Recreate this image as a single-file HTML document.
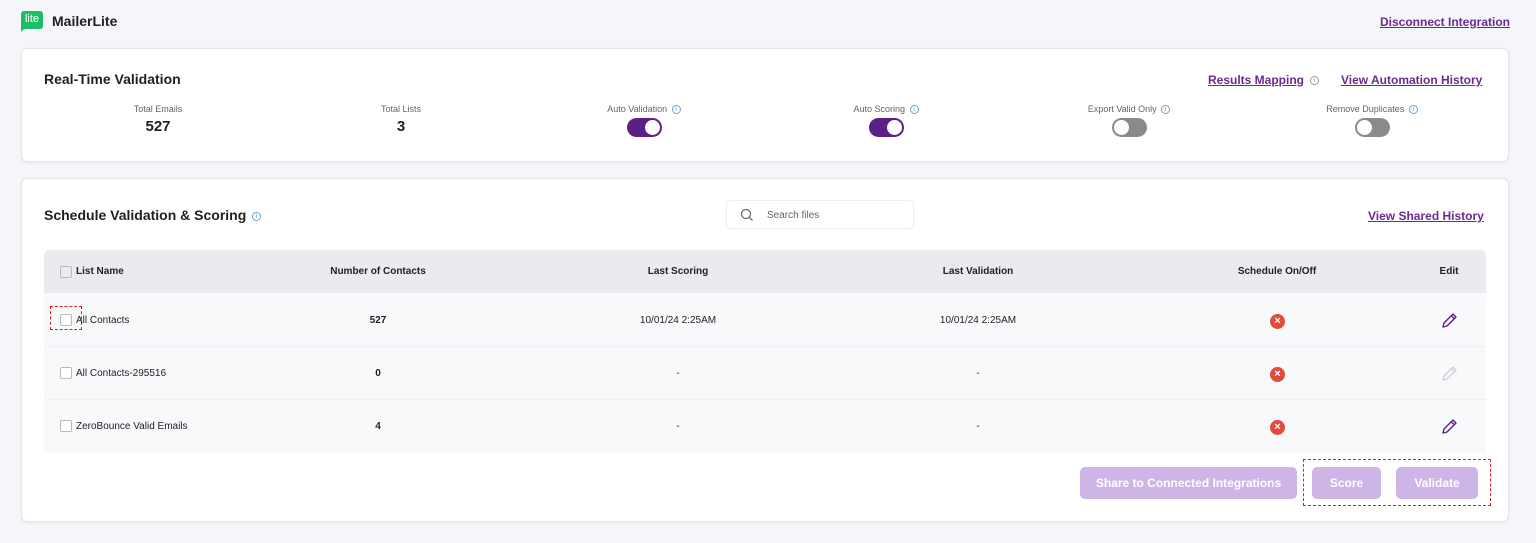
<!DOCTYPE html>
<html><head><meta charset="utf-8"><style>
*{margin:0;padding:0;box-sizing:border-box}
body{width:1536px;height:543px;background:#f5f6f9;font-family:"Liberation Sans",sans-serif;color:#1f1f24;position:relative;overflow:hidden}
.a{position:absolute}
.card{position:absolute;background:#fff;border:1px solid #e3e5ea;border-radius:6px;box-shadow:0 1px 3px rgba(0,0,0,.06)}
.lnk{color:#6b2a8f;text-decoration:underline;font-weight:bold;font-size:12px}
.stat{position:absolute;width:200px;text-align:center}
.stat .l{font-size:9px;color:#666;height:12px;line-height:12px}
.stat .v{font-size:15px;font-weight:bold;margin-top:3px}
.info{display:inline-block;width:9px;height:9px;border:1px solid #6aa3d0;border-radius:50%;font-size:7px;line-height:8px;text-align:center;color:#6aa3d0;vertical-align:middle;margin-left:2px;font-weight:normal}
.tg{width:35px;height:19px;border-radius:10px;margin:3px auto 0;position:relative}
.tg i{position:absolute;top:2px;width:15px;height:15px;border-radius:50%;background:#fff}
.on{background:#5b1f86}.on i{right:2px}
.off{background:#8a8a8a}.off i{left:2px}
.th{position:absolute;top:266px;font-size:10px;font-weight:bold;color:#222}
.row{position:absolute;left:44px;width:1442px;background:#f8f9fb;border-bottom:1px solid #eef0f3}
.cb{position:absolute;width:12px;height:12px;border:1px solid #b8b8bd;border-radius:2px;background:#fff}
.c{position:absolute;font-size:10px;transform:translateX(-50%);white-space:nowrap}
.x{position:absolute;width:15px;height:15px;border-radius:50%;background:#e04b3d;color:#fff;font-size:11px;line-height:15px;text-align:center;font-weight:bold}
.btn{position:absolute;top:467px;height:32px;background:#cdb6e6;border-radius:5px;color:#fff;font-weight:bold;font-size:12px;line-height:32px;text-align:center}
</style></head><body>
<div class="a" style="left:21px;top:11px;width:22px;height:18px;background:#1ebe64;border-radius:3px;color:#fff;font-size:11px;line-height:17px;text-align:center">lite</div>
<div class="a" style="left:21px;top:27px;width:0;height:0;border-left:5px solid #1ebe64;border-bottom:5px solid transparent"></div>
<div class="a" style="left:52px;top:13px;font-size:14px;font-weight:bold">MailerLite</div>
<div class="a lnk" style="left:1380px;top:15px">Disconnect Integration</div>

<div class="card" style="left:21px;top:48px;width:1488px;height:114px"></div>
<div class="a" style="left:44px;top:71px;font-size:14px;font-weight:bold">Real-Time Validation</div>
<div class="a lnk" style="left:1208px;top:73px">Results Mapping</div>
<div class="a" style="left:1308px;top:72px"><span class="info" style="color:#999;border-color:#999">i</span></div>
<div class="a lnk" style="left:1341px;top:73px">View Automation History</div>
<div class="stat" style="left:58px;top:103px"><div class="l">Total Emails</div><div class="v">527</div></div>
<div class="stat" style="left:301px;top:103px"><div class="l">Total Lists</div><div class="v">3</div></div>
<div class="stat" style="left:544px;top:103px"><div class="l">Auto Validation <span class="info">i</span></div><div class="tg on"><i></i></div></div>
<div class="stat" style="left:786px;top:103px"><div class="l">Auto Scoring <span class="info">i</span></div><div class="tg on"><i></i></div></div>
<div class="stat" style="left:1029px;top:103px"><div class="l">Export Valid Only <span class="info">i</span></div><div class="tg off"><i></i></div></div>
<div class="stat" style="left:1272px;top:103px"><div class="l">Remove Duplicates <span class="info">i</span></div><div class="tg off"><i></i></div></div>

<div class="card" style="left:21px;top:178px;width:1488px;height:344px"></div>
<div class="a" style="left:44px;top:207px;font-size:14px;font-weight:bold">Schedule Validation &amp; Scoring <span class="info">i</span></div>
<div class="a" style="left:726px;top:200px;width:188px;height:29px;border:1px solid #eceef2;border-radius:4px;background:#fff"></div>
<svg class="a" style="left:740px;top:208px" width="14" height="14" viewBox="0 0 14 14"><circle cx="6" cy="6" r="4.5" fill="none" stroke="#666" stroke-width="1.2"/><path d="M9.3 9.3L12.5 12.5" stroke="#666" stroke-width="1.3"/></svg>
<div class="a" style="left:767px;top:210px;font-size:10px;color:#666">Search files</div>
<div class="a lnk" style="left:1368px;top:209px">View Shared History</div>

<div class="a" style="left:44px;top:250px;width:1442px;height:43px;background:#e9ebef;border-radius:6px 6px 0 0"></div>
<div class="cb" style="left:60px;top:266px;background:transparent"></div>
<div class="th" style="left:76px">List Name</div>
<div class="th" style="left:378px;transform:translateX(-50%)">Number of Contacts</div>
<div class="th" style="left:678px;transform:translateX(-50%)">Last Scoring</div>
<div class="th" style="left:978px;transform:translateX(-50%)">Last Validation</div>
<div class="th" style="left:1277px;transform:translateX(-50%)">Schedule On/Off</div>
<div class="th" style="left:1449px;transform:translateX(-50%)">Edit</div>

<div class="row" style="top:293px;height:54px"></div>
<div class="row" style="top:347px;height:53px"></div>
<div class="row" style="top:400px;height:53px;border-bottom:none"></div>

<div class="cb" style="left:60px;top:314px"></div>
<div class="a" style="left:50px;top:306px;width:32px;height:24px;border:1.5px dashed #e02020"></div>
<div class="a" style="left:76px;top:315px;font-size:10px">All Contacts</div>
<div class="c" style="left:378px;top:315px;font-weight:bold">527</div>
<div class="c" style="left:678px;top:315px">10/01/24 2:25AM</div>
<div class="c" style="left:978px;top:315px">10/01/24 2:25AM</div>
<div class="x" style="left:1270px;top:314px">×</div>

<div class="cb" style="left:60px;top:367px"></div>
<div class="a" style="left:76px;top:368px;font-size:10px">All Contacts-295516</div>
<div class="c" style="left:378px;top:368px;font-weight:bold">0</div>
<div class="c" style="left:678px;top:368px">-</div>
<div class="c" style="left:978px;top:368px">-</div>
<div class="x" style="left:1270px;top:367px">×</div>

<div class="cb" style="left:60px;top:420px"></div>
<div class="a" style="left:76px;top:421px;font-size:10px">ZeroBounce Valid Emails</div>
<div class="c" style="left:378px;top:421px;font-weight:bold">4</div>
<div class="c" style="left:678px;top:421px">-</div>
<div class="c" style="left:978px;top:421px">-</div>
<div class="x" style="left:1270px;top:420px">×</div>

<svg class="a" style="left:1441px;top:312px" width="17" height="17" viewBox="0 0 17 17"><path d="M2 15L3 11L12 2L15 5L6 14Z M10.3 3.7L13.3 6.7" fill="none" stroke="#5b1f86" stroke-width="1.4" stroke-linejoin="round"/></svg>
<svg class="a" style="left:1441px;top:365px" width="17" height="17" viewBox="0 0 17 17"><path d="M2 15L3 11L12 2L15 5L6 14Z M10.3 3.7L13.3 6.7" fill="none" stroke="#cfcfd6" stroke-width="1.4" stroke-linejoin="round"/></svg>
<svg class="a" style="left:1441px;top:418px" width="17" height="17" viewBox="0 0 17 17"><path d="M2 15L3 11L12 2L15 5L6 14Z M10.3 3.7L13.3 6.7" fill="none" stroke="#5b1f86" stroke-width="1.4" stroke-linejoin="round"/></svg>

<div class="btn" style="left:1080px;width:217px">Share to Connected Integrations</div>
<div class="btn" style="left:1312px;width:69px">Score</div>
<div class="btn" style="left:1396px;width:82px">Validate</div>
<div class="a" style="left:1303px;top:459px;width:188px;height:47px;border:1.5px dashed #e02020"></div>
</body></html>
